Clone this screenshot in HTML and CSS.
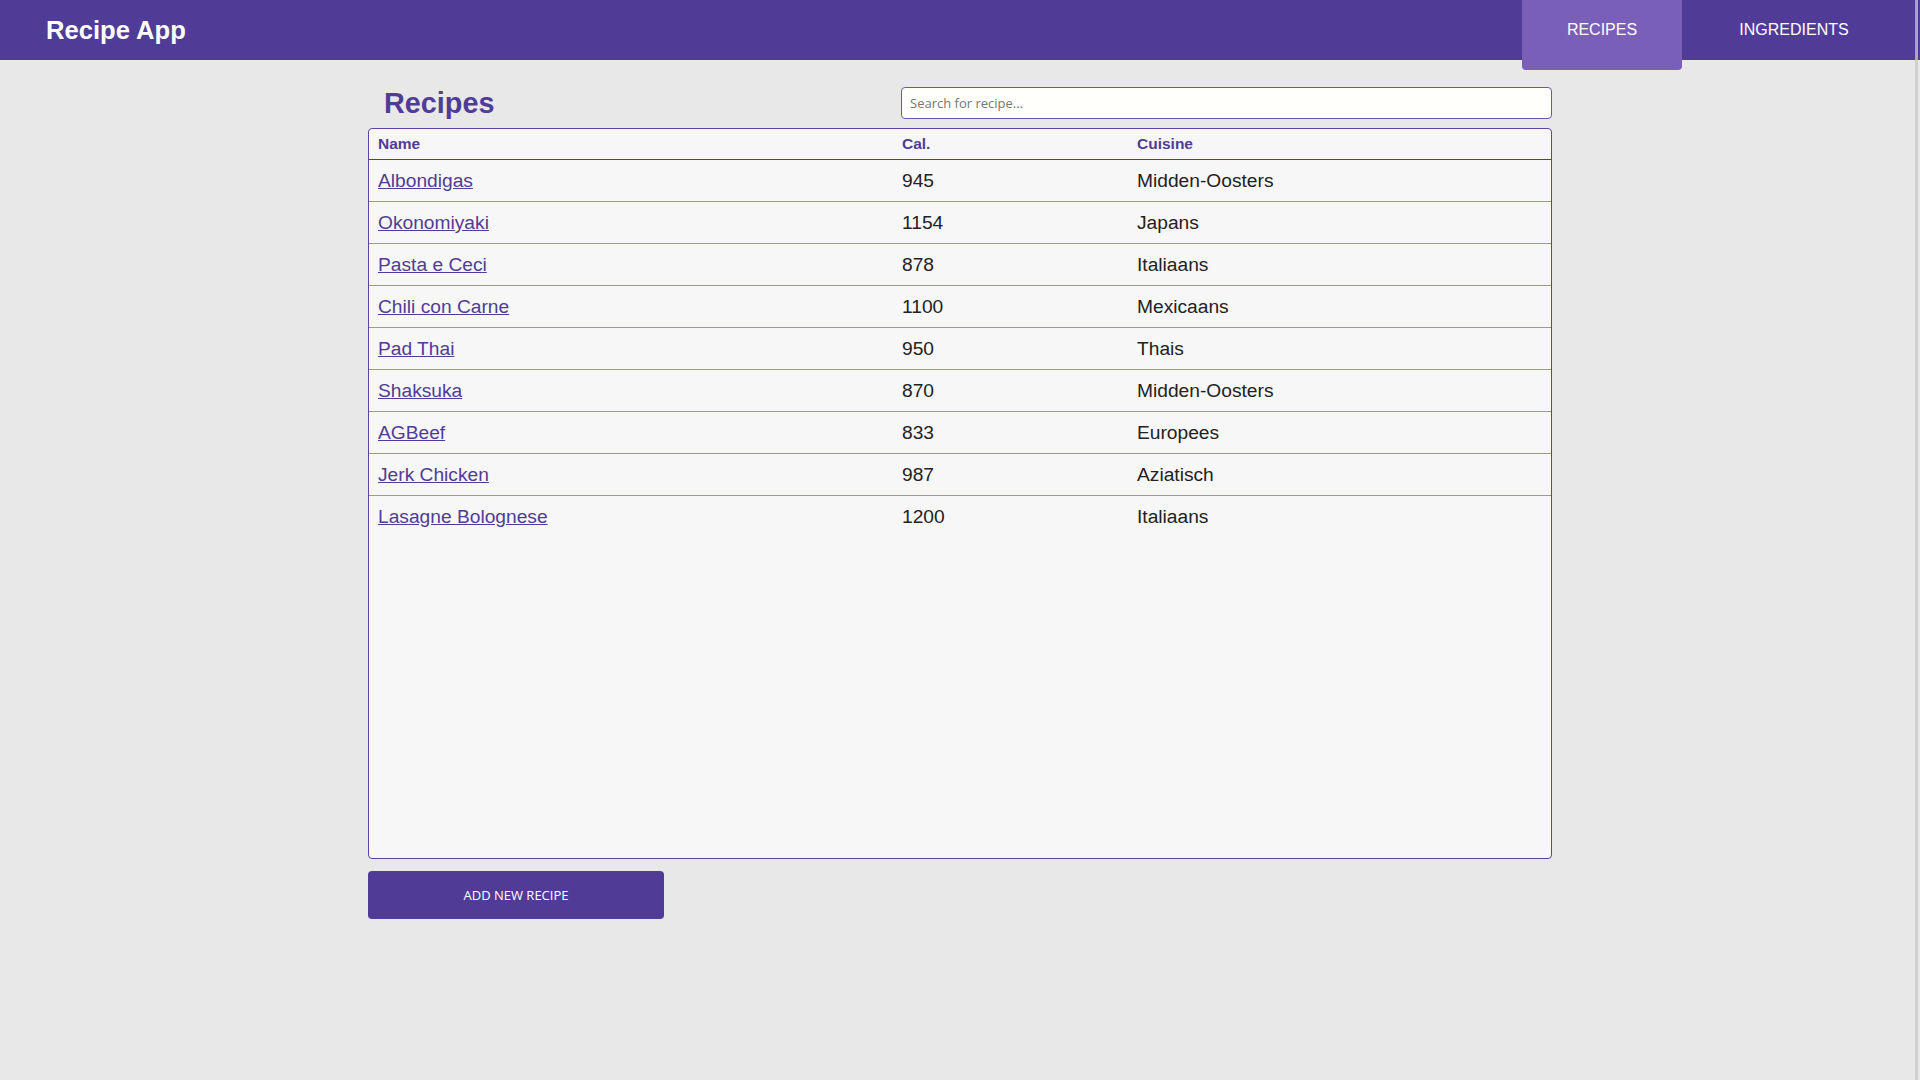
FILE: index.html
```html
<!DOCTYPE html>
<html lang="nl">
<head>
<meta charset="utf-8">
<title>Recipe App</title>
<link rel="stylesheet" href="styles.css">
</head>
<body>
<header class="topbar">
  <div class="brand">Recipe App</div>
  <nav class="tabs">
    <a class="tab tab-active" href="#">RECIPES</a>
    <a class="tab" href="#">INGREDIENTS</a>
  </nav>
</header>
<main class="page">
  <div class="title-row">
    <h1 class="page-title">Recipes</h1>
    <input class="search" type="text" placeholder="Search for recipe...">
  </div>
  <div class="table-box">
    <table class="recipes">
      <colgroup>
        <col class="col-name">
        <col class="col-cal">
        <col>
      </colgroup>
      <thead>
        <tr><th>Name</th><th>Cal.</th><th>Cuisine</th></tr>
      </thead>
      <tbody>
        <tr><td><a href="#">Albondigas</a></td><td>945</td><td>Midden-Oosters</td></tr>
        <tr><td><a href="#">Okonomiyaki</a></td><td>1154</td><td>Japans</td></tr>
        <tr><td><a href="#">Pasta e Ceci</a></td><td>878</td><td>Italiaans</td></tr>
        <tr><td><a href="#">Chili con Carne</a></td><td>1100</td><td>Mexicaans</td></tr>
        <tr><td><a href="#">Pad Thai</a></td><td>950</td><td>Thais</td></tr>
        <tr><td><a href="#">Shaksuka</a></td><td>870</td><td>Midden-Oosters</td></tr>
        <tr><td><a href="#">AGBeef</a></td><td>833</td><td>Europees</td></tr>
        <tr><td><a href="#">Jerk Chicken</a></td><td>987</td><td>Aziatisch</td></tr>
        <tr><td><a href="#">Lasagne Bolognese</a></td><td>1200</td><td>Italiaans</td></tr>
      </tbody>
    </table>
  </div>
  <button class="add-btn" type="button">ADD NEW RECIPE</button>
</main>
<div class="scroll-thumb"></div>
</body>
</html>
```
FILE: styles.css
```css
* { box-sizing: border-box; }

html, body {
  margin: 0;
  padding: 0;
}

body {
  background: #e8e8e8;
  font-family: "Liberation Sans", Arial, sans-serif;
  color: #222;
  min-height: 1080px;
}

.topbar {
  height: 60px;
  background: #503c96;
  display: flex;
  justify-content: space-between;
  align-items: flex-start;
  padding: 0 46px 0 46px;
}

.brand {
  color: #fff;
  font-weight: bold;
  font-size: 25.6px;
  line-height: 60px;
}

.tabs {
  display: flex;
  gap: 32px;
}

.tab {
  display: block;
  width: 160px;
  height: 60px;
  line-height: 60px;
  text-align: center;
  color: #fff;
  font-size: 16px;
  text-decoration: none;
}

.tab-active {
  height: 70px;
  background: #7a5fb8;
  border-radius: 0 0 4px 4px;
}

.page {
  width: 1184px;
  margin: 0 auto;
  padding-top: 27px;
}

.title-row {
  display: flex;
  justify-content: space-between;
  align-items: center;
  height: 32px;
  margin-bottom: 9px;
}

.page-title {
  margin: 0 0 0 16px;
  font-size: 28.8px;
  font-weight: bold;
  color: #503c96;
}

.search {
  width: 651px;
  height: 32px;
  border: 1px solid #6a56b0;
  border-radius: 4px;
  background: #fffffc;
  padding: 0 8px;
  font-family: "Open Sans", "Noto Sans", sans-serif;
  font-size: 13px;
  color: #222;
  outline: none;
}

.search::placeholder {
  color: #767676;
}

.table-box {
  height: 731px;
  border: 1px solid #5a46a0;
  border-radius: 4px;
  background: #f7f7f7;
  overflow: hidden;
}

.recipes {
  width: 100%;
  border-collapse: collapse;
  table-layout: fixed;
}

.col-name { width: 524px; }
.col-cal { width: 235px; }

.recipes th {
  text-align: left;
  font-size: 15.5px;
  font-weight: bold;
  color: #503c96;
  line-height: 18px;
  padding: 6px 9px;
  border-bottom: 1px solid #503c96;
}

.recipes td {
  font-size: 19.2px;
  line-height: 23px;
  padding: 9px 9px;
  color: #222;
  border-bottom: 1px solid #9b90cc;
}

.recipes tbody tr:last-child td {
  border-bottom: none;
}

.recipes a {
  color: #503c96;
  text-decoration: underline;
}

.add-btn {
  display: block;
  margin-top: 12px;
  width: 296px;
  height: 48px;
  border: none;
  border-radius: 4px;
  background: #503c96;
  color: #fff;
  font-family: "Open Sans", "Noto Sans", sans-serif;
  font-size: 13px;
  cursor: pointer;
}

.scroll-thumb {
  position: fixed;
  top: 0;
  right: 2px;
  width: 3px;
  height: 100%;
  background: rgba(200, 200, 200, 0.75);
}
```
